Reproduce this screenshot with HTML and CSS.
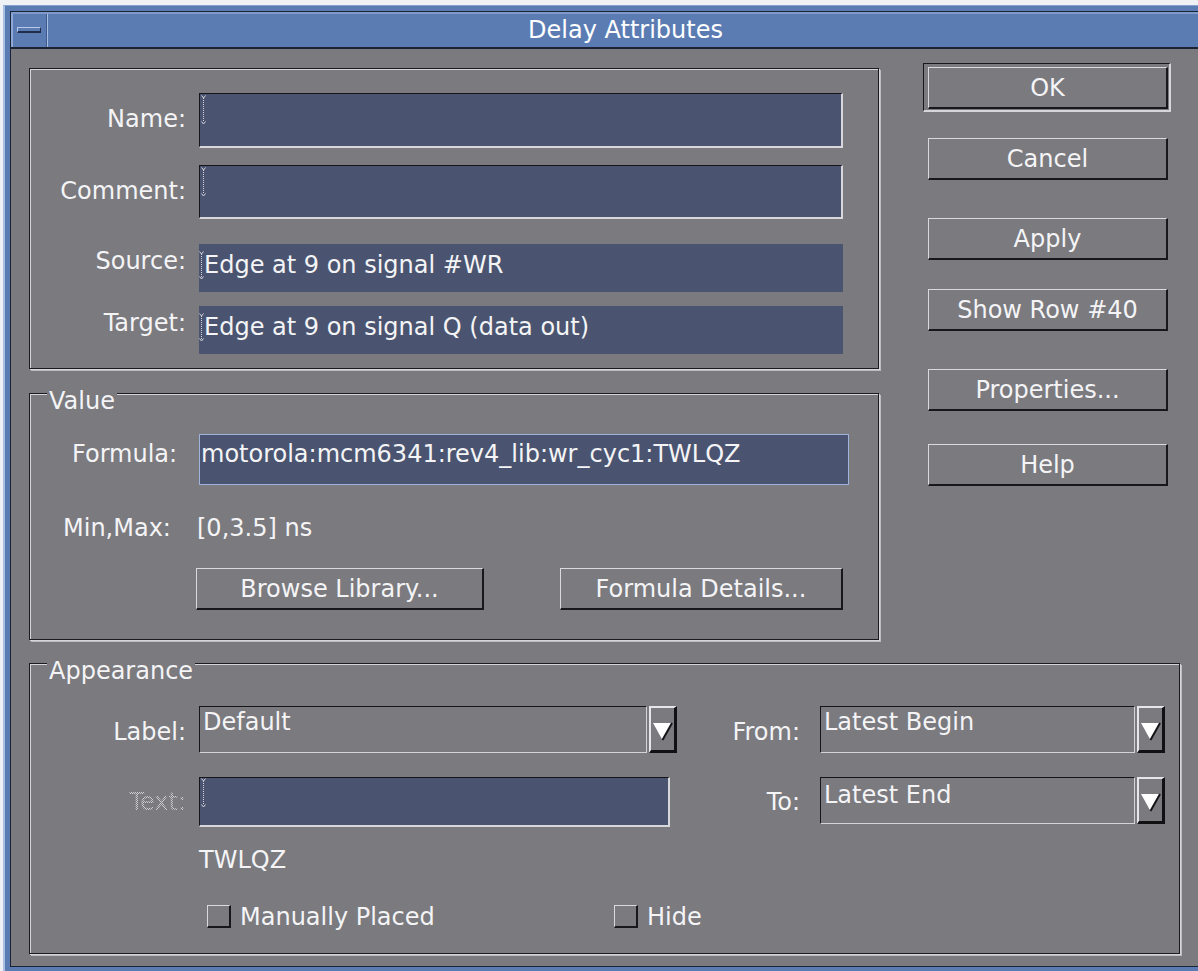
FILE: index.html
```html
<!DOCTYPE html>
<html lang="en">
<head>
<meta charset="utf-8">
<title>Delay Attributes</title>
<link rel="stylesheet" href="styles.css">
</head>
<body>
<div class="window">
  <div class="frame">
    <div class="titlebar">
      <div class="menu-btn"><span class="menu-dash"></span></div>
      <div class="title">Delay Attributes</div>
    </div>

    <div class="content">
      <div class="top">
        <div class="left-col">

          <div class="group ids">
            <div class="row r-name">
              <span class="lbl">Name:</span>
              <div class="field edit tall">
                <svg class="caret" width="5" height="30" viewBox="0 0 5 30"><path d="M2.5 3V27" stroke="#d6d6da" stroke-dasharray="1 1"/><path d="M0.5 0.5L2.5 3L4.5 0.5M0.5 26.5L2.5 29L4.5 26.5" stroke="#d6d6da" fill="none"/></svg>
              </div>
            </div>
            <div class="row r-comment">
              <span class="lbl">Comment:</span>
              <div class="field edit tall2">
                <svg class="caret" width="5" height="30" viewBox="0 0 5 30"><path d="M2.5 3V27" stroke="#d6d6da" stroke-dasharray="1 1"/><path d="M0.5 0.5L2.5 3L4.5 0.5M0.5 26.5L2.5 29L4.5 26.5" stroke="#d6d6da" fill="none"/></svg>
              </div>
            </div>
            <div class="row r-source">
              <span class="lbl lbl-flat">Source:</span>
              <div class="field flat">
                <svg class="caret" width="5" height="29" viewBox="0 0 5 29"><path d="M2.5 3V26" stroke="#d6d6da" stroke-dasharray="1 1"/><path d="M0.5 0.5L2.5 3L4.5 0.5M0.5 25.5L2.5 28L4.5 25.5" stroke="#d6d6da" fill="none"/></svg>
                <span class="ftext">Edge at 9 on signal #WR</span>
              </div>
            </div>
            <div class="row r-target">
              <span class="lbl lbl-flat">Target:</span>
              <div class="field flat">
                <svg class="caret" width="5" height="29" viewBox="0 0 5 29"><path d="M2.5 3V26" stroke="#d6d6da" stroke-dasharray="1 1"/><path d="M0.5 0.5L2.5 3L4.5 0.5M0.5 25.5L2.5 28L4.5 25.5" stroke="#d6d6da" fill="none"/></svg>
                <span class="ftext">Edge at 9 on signal Q (data out)</span>
              </div>
            </div>
          </div>

          <div class="group value">
            <span class="legend">Value</span>
            <div class="vrow formula-row">
              <span class="formula-lbl">Formula:</span>
              <div class="formula">motorola:mcm6341:rev4_lib:wr_cyc1:TWLQZ</div>
            </div>
            <div class="vrow minmax-row">
              <span class="minmax-lbl">Min,Max:</span>
              <span>[0,3.5] ns</span>
            </div>
            <div class="vrow vbtn-row">
              <button class="btn btn-browse">Browse Library...</button>
              <button class="btn btn-details">Formula Details...</button>
            </div>
          </div>

        </div>

        <div class="btn-col">
          <div class="default-frame"><button class="btn">OK</button></div>
          <button class="btn side b-cancel">Cancel</button>
          <button class="btn side b-apply">Apply</button>
          <button class="btn side b-show">Show Row #40</button>
          <button class="btn side b-props">Properties...</button>
          <button class="btn side b-help">Help</button>
        </div>
      </div>

      <div class="group appearance">
        <span class="legend">Appearance</span>

        <div class="arow arow-1">
          <span class="albl">Label:</span>
          <div class="combo">
            <div class="combo-field label-field">Default</div>
            <div class="combo-arrow">
              <svg width="21" height="19" viewBox="0 0 21 19"><polygon points="1,1 20,1 10.5,18" fill="#fff"/><path d="M20 1L10.5 18" stroke="#141418" stroke-width="2"/></svg>
            </div>
          </div>
          <span class="rlbl from-lbl">From:</span>
          <div class="combo">
            <div class="combo-field side-field">Latest Begin</div>
            <div class="combo-arrow">
              <svg width="21" height="19" viewBox="0 0 21 19"><polygon points="1,1 20,1 10.5,18" fill="#fff"/><path d="M20 1L10.5 18" stroke="#141418" stroke-width="2"/></svg>
            </div>
          </div>
        </div>

        <div class="arow arow-2">
          <span class="albl disabled">Text:</span>
          <div class="field edit text-field">
            <svg class="caret" width="5" height="30" viewBox="0 0 5 30"><path d="M2.5 3V27" stroke="#d6d6da" stroke-dasharray="1 1"/><path d="M0.5 0.5L2.5 3L4.5 0.5M0.5 26.5L2.5 29L4.5 26.5" stroke="#d6d6da" fill="none"/></svg>
          </div>
          <span class="rlbl to-lbl">To:</span>
          <div class="combo">
            <div class="combo-field side-field to-field">Latest End</div>
            <div class="combo-arrow">
              <svg width="21" height="19" viewBox="0 0 21 19"><polygon points="1,1 20,1 10.5,18" fill="#fff"/><path d="M20 1L10.5 18" stroke="#141418" stroke-width="2"/></svg>
            </div>
          </div>
        </div>

        <div class="name-preview">TWLQZ</div>

        <div class="checks">
          <label class="check-item first"><span class="check"></span>Manually Placed</label>
          <label class="check-item"><span class="check"></span>Hide</label>
        </div>
      </div>
    </div>
  </div>
</div>
</body>
</html>
```

FILE: styles.css
```css
* {
  box-sizing: border-box;
}

html, body {
  margin: 0;
  padding: 0;
}

body {
  width: 1198px;
  height: 971px;
  overflow: hidden;
  background: #eff1f5;
  font-family: "DejaVu Sans", "Liberation Sans", sans-serif;
  font-size: 24px;
  line-height: 28px;
  color: #f4f4f6;
}

/* ---------- window frame ---------- */
.window {
  margin: 5px 0 0 3px;
  width: 1215px;
  height: 990px;
  background: #5b7cb3;
  border-left: 2px solid #a9bfe4;
  border-top: 1px solid #86a0d0;
  padding: 5px 0 0 5px;
}

.frame {
  width: 1192px;
  height: 956px;
  border-top: 1px solid #1a2234;
  border-left: 1px solid #1a2234;
  border-bottom: 1px solid #1a2234;
  background: #7a7a7f;
}

.titlebar {
  height: 37px;
  display: flex;
  background: #5b7cb3;
  border-top: 2px solid #7e9bcc;
  border-bottom: 2px solid #1a2234;
}

.menu-btn {
  width: 36px;
  height: 33px;
  border-left: 2px solid #8da7d6;
  border-right: 1px solid #3d5a8e;
  box-shadow: 1px 0 0 #a9bfe4;
}

.menu-dash {
  display: block;
  margin: 13px 0 0 4px;
  width: 24px;
  height: 6px;
  background: #5b7cb3;
  border-top: 1px solid #b8c9e8;
  border-left: 1px solid #b8c9e8;
  border-bottom: 2px solid #1f2d4a;
  border-right: 1px solid #1f2d4a;
}

.title {
  flex: 1;
  text-align: center;
  font-size: 24px;
  line-height: 33px;
  color: #ffffff;
  padding-left: 2px;
}

/* ---------- content ---------- */
.content {
  padding: 19px 0 0 18px;
}

.top {
  display: flex;
  align-items: flex-start;
}

.left-col {
  width: 850px;
}

/* etched group box */
.group {
  position: relative;
  border: 1px solid #1c1c20;
  box-shadow: inset 1px 1px 0 #d6d6d8, 1px 1px 0 #d6d6d8, 2px 2px 0 #bdbdc0;
}

.legend {
  position: absolute;
  top: -7px;
  left: 17px;
  padding: 0 2px;
  background: #7a7a7f;
  line-height: 28px;
}

/* ---------- identity group ---------- */
.ids {
  padding: 24px 0 14px 0;
}

.row {
  display: flex;
  align-items: flex-start;
}

.lbl {
  width: 156px;
  margin-right: 13px;
  text-align: right;
  margin-top: 12px;
}

.lbl-flat {
  margin-top: 3px;
}

.r-comment { margin-top: 17px; }
.r-source { margin-top: 25px; }
.r-target { margin-top: 14px; }

.field {
  width: 644px;
  background: #4a5470;
  display: flex;
  align-items: flex-start;
}

.edit {
  border-style: solid;
  border-width: 1px 2px 2px 1px;
  border-color: #16161a #d8d8da #d8d8da #16161a;
  padding: 1px 0 0 1px;
}

.tall { height: 55px; }
.tall2 { height: 54px; }

.flat {
  height: 48px;
  padding: 7px 0 0 0;
}

.caret {
  flex: none;
  display: block;
}

.ftext {
  white-space: nowrap;
}

/* ---------- value group ---------- */
.value {
  margin-top: 24px;
  padding: 40px 0 29px 0;
}

.vrow {
  display: flex;
  align-items: flex-start;
}

.formula-lbl {
  margin-left: 42px;
  width: 127px;
  margin-top: 6px;
}

.formula {
  width: 650px;
  height: 51px;
  background: #4a5470;
  border: 1px solid #a0b3dc;
  padding: 5px 0 0 1px;
  white-space: nowrap;
}

.minmax-row {
  margin-top: 29px;
}

.minmax-lbl {
  margin-left: 33px;
  width: 134px;
}

.vbtn-row {
  margin-top: 26px;
}

.btn {
  display: block;
  width: 240px;
  height: 42px;
  margin: 0;
  padding: 0;
  background: #7a7a7f;
  color: #f4f4f6;
  font-family: inherit;
  font-size: 24px;
  line-height: 28px;
  text-align: center;
  border-style: solid;
  border-width: 1px 2px 2px 1px;
  border-color: #dadadc #18181c #18181c #dadadc;
  border-radius: 0;
}

.btn-browse {
  margin-left: 166px;
  width: 288px;
}

.btn-details {
  margin-left: 76px;
  width: 283px;
}

/* ---------- right button column ---------- */
.btn-col {
  margin-left: 44px;
  margin-top: -5px;
  display: flex;
  flex-direction: column;
  align-items: flex-start;
}

.default-frame {
  border-style: solid;
  border-width: 1px 2px 2px 1px;
  border-color: #18181c #d6d6d8 #d6d6d8 #18181c;
  padding: 3px 1px 1px 4px;
}

.side { margin-left: 5px; }
.b-cancel { margin-top: 26px; }
.b-apply { margin-top: 38px; }
.b-show { margin-top: 29px; }
.b-props { margin-top: 38px; }
.b-help { margin-top: 33px; }

/* ---------- appearance group ---------- */
.appearance {
  margin-top: 23px;
  width: 1151px;
  padding: 42px 0 22px 0;
}

.arow {
  display: flex;
  align-items: flex-start;
}

.arow-2 {
  margin-top: 24px;
}

.albl {
  width: 156px;
  margin-right: 13px;
  text-align: right;
  margin-top: 12px;
}

.arow-2 .albl {
  margin-top: 11px;
}

.disabled {
  color: transparent;
  background-image: repeating-conic-gradient(#cfcfd3 0 25%, transparent 0 50%);
  background-size: 2px 2px;
  -webkit-background-clip: text;
  background-clip: text;
}

.combo {
  display: flex;
  align-items: flex-start;
  height: 47px;
}

.combo-field {
  height: 47px;
  border-style: solid;
  border-width: 1px;
  border-color: #16161a #d4d4d6 #d4d4d6 #16161a;
  padding: 1px 0 0 3px;
  white-space: nowrap;
}

.label-field { width: 448px; }
.side-field { width: 315px; }
.to-field { padding-top: 3px; }

.combo-arrow {
  width: 28px;
  height: 47px;
  margin-left: 2px;
  border-style: solid;
  border-width: 2px 3px 3px 2px;
  border-color: #e6e6e8 #111114 #111114 #e6e6e8;
  padding: 14px 0 0 1px;
}

.combo-arrow svg {
  display: block;
}

.rlbl {
  text-align: right;
  margin-right: 20px;
}

.from-lbl {
  width: 123px;
  margin-top: 12px;
}

.to-lbl {
  width: 130px;
  margin-top: 11px;
}

.text-field {
  width: 471px;
  height: 50px;
  padding: 0 0 0 1px;
}

.name-preview {
  margin: 19px 0 0 169px;
}

.checks {
  display: flex;
  align-items: flex-start;
  margin-top: 29px;
  height: 28px;
}

.check-item {
  display: flex;
  align-items: flex-start;
}

.check-item.first {
  margin-left: 177px;
  width: 407px;
}

.check {
  display: block;
  width: 24px;
  height: 23px;
  margin: 2px 9px 0 0;
  border-style: solid;
  border-width: 1px 2px 2px 1px;
  border-color: #dadadc #18181c #18181c #dadadc;
}
```
